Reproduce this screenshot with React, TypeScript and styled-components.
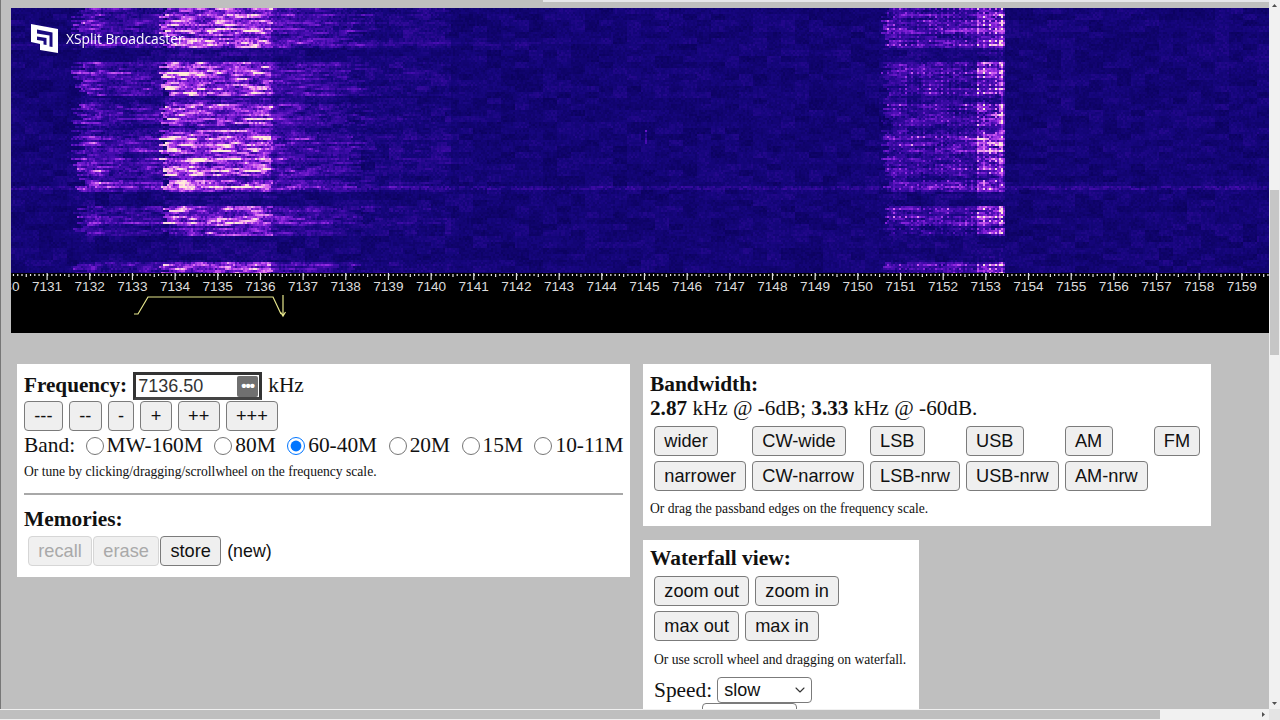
import { useEffect, useRef } from 'react';
import { ChevronDown } from 'lucide-react';
import styled, { createGlobalStyle } from 'styled-components';

const GlobalStyle = createGlobalStyle`
  html, body {
    margin: 0;
    height: 100%;
    overflow: hidden;
  }
  #root {
    height: 100%;
  }
`;

const Page = styled.div`
  display: grid;
  grid-template-columns: 1fr 11px;
  grid-template-rows: 1fr 11px;
  width: 1280px;
  height: 720px;
  background: #bfbfbf;
  font-family: "Liberation Serif", "Times New Roman", serif;
  color: #111;
`;

const Main = styled.div`
  overflow: hidden;
  border-left: 1px solid #777;
`;

const TopStrip = styled.div`
  height: 2px;
  margin-left: 542px;
  margin-bottom: 6px;
  background: #e6e6ea;
`;

const Receiver = styled.div`
  position: relative;
  width: 1258px;
  margin-left: 10px;
`;

const WaterfallCanvas = styled.canvas`
  display: block;
  width: 1258px;
  height: 265px;
  filter: blur(0.7px);
`;

const Scale = styled.svg`
  display: block;
  width: 1258px;
  height: 60px;
  background: #000;
`;

const Watermark = styled.div`
  position: absolute;
  top: 16px;
  left: 20px;
  display: flex;
  align-items: center;
  gap: 8px;
  color: #fff;
  font: 500 13.8px "Open Sans", "Noto Sans", sans-serif;
`;

const Panels = styled.div`
  display: flex;
  align-items: flex-start;
  gap: 13px;
  padding: 31px 0 0 16px;
`;

const Panel = styled.section<{ $width: number; $height?: number; $top?: number }>`
  box-sizing: border-box;
  width: ${(p) => p.$width}px;
  height: ${(p) => (p.$height ? `${p.$height}px` : 'auto')};
  padding: ${(p) => p.$top ?? 8}px 7px 8px;
  background: #fff;
`;

const RightColumn = styled.div`
  display: flex;
  flex-direction: column;
  gap: 14px;
`;

const Row = styled.div`
  display: flex;
  align-items: center;
`;

const FreqRow = styled(Row)`
  gap: 6px;
  font-size: 21.4px;
  height: 28px;
`;

const Heading = styled.h2`
  margin: 0;
  font-size: 21.4px;
  font-weight: bold;
  line-height: 24px;
`;

const FreqHeading = styled(Heading)`
  padding-bottom: 2px;
  font-size: 21.2px;
`;

const Unit = styled.span`
  padding-bottom: 2px;
`;

const FreqBox = styled.div`
  position: relative;
  box-sizing: border-box;
  width: 129px;
  height: 28px;
  border: 3px solid #333;
  border-bottom-color: #444;
  background: #fff;
  display: flex;
  align-items: center;
`;

const FreqInput = styled.input`
  width: 100px;
  border: 0;
  outline: 0;
  padding: 0 0 0 2px;
  background: transparent;
  color: #333;
  font: 18px "Liberation Sans", Arial, sans-serif;
`;

const MoreBadge = styled.span`
  position: absolute;
  top: 1px;
  right: 1px;
  width: 21px;
  height: 21px;
  border-radius: 2px;
  background: #707070;
  color: #fff;
  font: bold 15px/20px "Liberation Sans", Arial, sans-serif;
  text-align: center;
  letter-spacing: -1px;
`;

const ButtonRow = styled(Row)<{ $gap?: number; $top?: number; $left?: number }>`
  gap: ${(p) => p.$gap ?? 6.1}px;
  margin-top: ${(p) => p.$top ?? 0}px;
  margin-left: ${(p) => p.$left ?? 0}px;
`;

const Btn = styled.button`
  box-sizing: border-box;
  height: 30px;
  padding: 0 9.3px;
  border: 1.4px solid #7b7b7b;
  border-radius: 4px;
  background: #efefef;
  color: #111;
  font: 18.2px "Liberation Sans", Arial, sans-serif;
  white-space: nowrap;
  &:disabled {
    border-color: #d6d6d6;
    background: #f0f0f0;
    color: #a9a9a9;
  }
`;

const BandRow = styled(Row)`
  font-size: 21.4px;
  height: 29px;
  white-space: nowrap;
`;

const BandTitle = styled.span`
  flex: none;
  width: 61.5px;
`;

const BandLabel = styled.label`
  flex: none;
  display: flex;
  align-items: center;
  gap: 3px;
  margin-right: 11.5px;
  &:last-child {
    margin-right: 0;
  }
`;

const Radio = styled.input`
  width: 18px;
  height: 18px;
  margin: 0;
  accent-color: #0075ff;
`;

const Note = styled.p<{ $left?: number; $top?: number }>`
  margin: ${(p) => p.$top ?? 0}px 0 0 ${(p) => p.$left ?? 0}px;
  font-size: 13.6px;
  line-height: 18px;
  white-space: nowrap;
`;

const Rule = styled.hr`
  height: 2px;
  margin: 12px 0 12px;
  border: 0;
  background: #a8a8a8;
`;

const NewTag = styled.span`
  margin-left: 5px;
  font: 17.8px "Liberation Sans", Arial, sans-serif;
`;

const BwLine = styled.div`
  font-size: 21.2px;
  line-height: 24px;
  margin-bottom: 6px;
`;

const BwGrid = styled.div`
  display: grid;
  grid-template-columns: repeat(6, auto);
  justify-content: start;
  justify-items: start;
  column-gap: 5.6px;
  row-gap: 5px;
  margin-left: 4px;
`;

const SelectRow = styled(Row)<{ $top?: number }>`
  font-size: 21.4px;
  gap: 5px;
  margin: ${(p) => p.$top ?? 0}px 0 0 4px;
`;

const SelectWrap = styled.span`
  position: relative;
  display: block;
  color: #333;
  & > svg {
    position: absolute;
    top: 5px;
    right: 4px;
    pointer-events: none;
  }
`;

const Select = styled.select<{ $width: number }>`
  display: block;
  box-sizing: border-box;
  width: ${(p) => p.$width}px;
  height: 26px;
  padding-left: 6px;
  appearance: none;
  border: 1.4px solid #7b7b7b;
  border-radius: 4px;
  background: #fff;
  color: #111;
  font: 18px "Liberation Sans", Arial, sans-serif;
`;

const ScrollTrack = styled.div<{ $vertical?: boolean }>`
  position: relative;
  background: #f1f1f1;
  display: flex;
  flex-direction: ${(p) => (p.$vertical ? 'column' : 'row')};
  justify-content: space-between;
  align-items: center;
`;

const VThumb = styled.div`
  position: absolute;
  top: 190px;
  left: 1px;
  right: 1px;
  height: 165px;
  background: #c6c6c6;
`;

const HThumb = styled.div`
  position: absolute;
  top: 1px;
  bottom: 1px;
  left: 0;
  width: 1160px;
  background: #bfbfbf;
`;

const Arrow = styled.svg`
  display: block;
  width: 11px;
  height: 11px;
  fill: #505050;
`;

const Corner = styled.div`
  background: #e4e4e4;
`;

const WIDTH = 1258;
const HEIGHT = 265;

// dark rows in the waterfall, [from, to, how much signal is left]
const GAPS = [
  [26, 30, 0.55],
  [40, 54, 0.14],
  [88, 95, 0.35],
  [117, 122, 0.4],
  [167, 171, 0.45],
  [184, 197, 0.12],
  [218, 222, 0.5],
  [227, 254, 0.07],
];

const COLOURS = [
  [6, 0, 80],
  [22, 6, 126],
  [70, 12, 176],
  [140, 36, 222],
  [210, 95, 240],
  [250, 190, 235],
  [255, 236, 215],
];

function paint(ctx: CanvasRenderingContext2D) {
  let seed = 91237;
  const rnd = () => {
    seed = (seed * 1664525 + 1013904223) >>> 0;
    return seed / 4294967296;
  };
  const img = ctx.createImageData(WIDTH, HEIGHT);

  const rows: number[] = [];
  const jitter: number[] = [];
  const streaks: number[][] = [];
  for (let y = 0; y < HEIGHT; y++) {
    if (y % 2 === 0) {
      rows[y] = 0.55 + rnd() * 0.7;
      jitter[y] = (rnd() - 0.5) * 18;
      const knots: number[] = [];
      for (let k = 0; k < WIDTH / 9 + 2; k++) knots.push(rnd());
      streaks[y] = knots;
    } else {
      rows[y] = rows[y - 1];
      jitter[y] = jitter[y - 1];
      streaks[y] = streaks[y - 1];
    }
    const gap = GAPS.find((g) => y >= g[0] && y < g[1]);
    if (gap) rows[y] *= gap[2];
  }

  // slower noise for the soft blue background
  const blobW = 14;
  const blobRow = Math.ceil(WIDTH / blobW + 2);
  const blobs: number[] = [];
  for (let i = 0; i < blobRow * (HEIGHT / 6 + 2); i++) blobs.push(rnd());

  for (let y = 0; y < HEIGHT; y++) {
    for (let x = 0; x < WIDTH; x++) {
      if (x % 2 || y % 2) {
        const from = ((y - y % 2) * WIDTH + (x - x % 2)) * 4;
        const to = (y * WIDTH + x) * 4;
        img.data[to] = img.data[from];
        img.data[to + 1] = img.data[from + 1];
        img.data[to + 2] = img.data[from + 2];
        img.data[to + 3] = 255;
        continue;
      }
      const page = x + 11;
      const k = x / 9;
      const k0 = Math.floor(k);
      const streak = streaks[y][k0] + (streaks[y][k0 + 1] - streaks[y][k0]) * (k - k0);
      const fine = rnd();
      const blob = blobs[Math.floor(y / 6) * blobRow + Math.floor(x / blobW)];
      let v = 0.05 + blob * 0.1 + fine * 0.07;
      const m = 0.22 + streak * streak * 1.0 + fine * 0.28;

      // left signal, with a frayed edge
      const edge = jitter[y];
      let s = 0;
      if (page >= 163 + edge * 0.6 && page < 271 + edge * 0.15) s = 0.72;
      else if (page >= 271 && page < 365 + edge * 2) s = 0.34 - ((page - 271) / 94) * 0.18;
      else if (page >= 78 + edge && page < 163) s = page < 100 ? 0.36 : 0.25;
      else if (page >= 365 && page < 450) s = 0.08;
      if (s) {
        const clump = page < 205 && ((y > 62 && y < 88) || (y > 150 && y < 184)) ? 1.3 : 1;
        v += s * rows[y] * m * clump;
      }

      // right signal, dotted with a hard edge at 1004
      let d = 0;
      if (page >= 976 && page < 1004) d = 0.72;
      else if (page >= 885 + edge * 0.5 && page < 976) d = 0.36;
      if (d) {
        const dotted = (x % 6 < 2 && y % 4 < 2 ? 0.5 : 0) + (page >= 998 && page < 1002 ? 0.4 : 0);
        v += d * rows[y] * (m * 0.7 + dotted * (0.4 + fine));
      }

      // faint carriers
      if (y >= 178 && y < 181) v += 0.05 + fine * 0.06;
      if (y >= 34 && y < 37 && page < 540) v += 0.04;
      if (page >= 644 && page < 646 && y > 120 && y < 136) v += 0.2 * fine + 0.1;

      v = Math.min(0.999, v);
      const at = v * (COLOURS.length - 1);
      const i = Math.floor(at);
      const f = at - i;
      const to = (y * WIDTH + x) * 4;
      for (let c = 0; c < 3; c++) {
        img.data[to + c] = COLOURS[i][c] + (COLOURS[i + 1][c] - COLOURS[i][c]) * f;
      }
      img.data[to + 3] = 255;
    }
  }
  ctx.putImageData(img, 0, 0);
}

function Waterfall() {
  const ref = useRef<HTMLCanvasElement>(null);
  useEffect(() => {
    const ctx = ref.current?.getContext('2d');
    if (ctx) paint(ctx);
  }, []);
  return <WaterfallCanvas ref={ref} width={WIDTH} height={HEIGHT} />;
}

const TICK = 42.67;
const FIRST_X = 36; // 7131 inside the scale

function FrequencyScale() {
  const labels = [];
  const ticks = [];
  for (let i = -1; i < 29; i++) {
    const x = FIRST_X + i * TICK;
    labels.push(
      <text key={i} x={x} y={18} textAnchor="middle" fill="#dcdcdc" fontSize="13.6" fontFamily="Liberation Sans, Arial, sans-serif">
        {7131 + i}
      </text>,
    );
    ticks.push(<rect key={`m${i}`} x={x - 0.5} y={0} width={1.2} height={7} fill="#ddd" />);
    for (let j = 0; j < 10; j++) {
      ticks.push(<rect key={`t${i}-${j}`} x={x + (j * TICK) / 10} y={1} width={1.2} height={j === 5 ? 3 : 2} fill="#e6e6e6" />);
    }
  }
  return (
    <Scale viewBox="0 0 1258 60">
      {ticks}
      {labels}
      <g fill="none" stroke="#e6e68c" strokeWidth="1.2">
        <path d="M123 41H127L137 24H262L270 41" />
        <path d="M272 22V43M269.5 39L272 43L274.5 39" />
      </g>
    </Scale>
  );
}

function Logo() {
  return (
    <svg width="27" height="29" viewBox="0 0 27 29">
      <path fill="#fff" d="M0 0L27 5V29L9 26V20L0 18Z" />
      <path fill="#1a0a80" d="M6 5.5L21.5 8.5V23L18.5 22.5V11.5L6 9.5ZM6 12.5L15.5 14V21L12.5 20.5V17L6 16Z" />
    </svg>
  );
}

const BANDS = ['MW-160M', '80M', '60-40M', '20M', '15M', '10-11M'];
const BW_TOP = ['wider', 'CW-wide', 'LSB', 'USB', 'AM', 'FM'];
const BW_BOTTOM = ['narrower', 'CW-narrow', 'LSB-nrw', 'USB-nrw', 'AM-nrw'];

export default function App() {
  return (
    <Page>
      <GlobalStyle />
      <Main>
        <TopStrip />
        <Receiver>
          <Waterfall />
          <FrequencyScale />
          <Watermark>
            <Logo />
            XSplit Broadcaster
          </Watermark>
        </Receiver>
        <Panels>
          <Panel $width={613} $height={213}>
            <FreqRow>
              <FreqHeading>Frequency:</FreqHeading>
              <FreqBox>
                <FreqInput defaultValue="7136.50" />
                <MoreBadge>•••</MoreBadge>
              </FreqBox>
              <Unit>kHz</Unit>
            </FreqRow>
            <ButtonRow $top={1}>
              {['---', '--', '-', '+', '++', '+++'].map((b) => (
                <Btn key={b}>{b}</Btn>
              ))}
            </ButtonRow>
            <BandRow>
              <BandTitle>Band:</BandTitle>
              {BANDS.map((b) => (
                <BandLabel key={b}>
                  <Radio type="radio" name="band" defaultChecked={b === '60-40M'} />
                  {b}
                </BandLabel>
              ))}
            </BandRow>
            <Note $top={3}>Or tune by clicking/dragging/scrollwheel on the frequency scale.</Note>
            <Rule />
            <Heading>Memories:</Heading>
            <ButtonRow $gap={1} $left={4} $top={5}>
              <Btn disabled>recall</Btn>
              <Btn disabled>erase</Btn>
              <Btn>store</Btn>
              <NewTag>(new)</NewTag>
            </ButtonRow>
          </Panel>
          <RightColumn>
            <Panel $width={568} $height={162}>
              <Heading>Bandwidth:</Heading>
              <BwLine>
                <b>2.87</b> kHz @ -6dB; <b>3.33</b> kHz @ -60dB.
              </BwLine>
              <BwGrid>
                {BW_TOP.map((b) => (
                  <Btn key={b}>{b}</Btn>
                ))}
                {BW_BOTTOM.map((b) => (
                  <Btn key={b}>{b}</Btn>
                ))}
              </BwGrid>
              <Note $top={9}>Or drag the passband edges on the frequency scale.</Note>
            </Panel>
            <Panel $width={276} $top={6}>
              <Heading>Waterfall view:</Heading>
              <ButtonRow $left={4} $top={6} $gap={5.6}>
                <Btn>zoom out</Btn>
                <Btn>zoom in</Btn>
              </ButtonRow>
              <ButtonRow $left={4} $top={5} $gap={5.6}>
                <Btn>max out</Btn>
                <Btn>max in</Btn>
              </ButtonRow>
              <Note $left={4} $top={10}>Or use scroll wheel and dragging on waterfall.</Note>
              <SelectRow $top={8}>
                Speed:
                <SelectWrap>
                  <Select $width={95}>
                    <option>slow</option>
                  </Select>
                  <ChevronDown size={16} strokeWidth={1.6} />
                </SelectWrap>
              </SelectRow>
              <SelectRow>
                Size:
                <SelectWrap>
                  <Select $width={95}>
                    <option>medium</option>
                  </Select>
                </SelectWrap>
              </SelectRow>
            </Panel>
          </RightColumn>
        </Panels>
      </Main>
      <ScrollTrack $vertical>
        <Arrow viewBox="0 0 11 11">
          <path d="M5.5 4L8 7H3Z" />
        </Arrow>
        <VThumb />
        <Arrow viewBox="0 0 11 11">
          <path d="M3 4H8L5.5 7Z" />
        </Arrow>
      </ScrollTrack>
      <ScrollTrack>
        <HThumb />
        <span />
        <Arrow viewBox="0 0 11 11">
          <path d="M4 3L7 5.5L4 8Z" />
        </Arrow>
      </ScrollTrack>
      <Corner />
    </Page>
  );
}
